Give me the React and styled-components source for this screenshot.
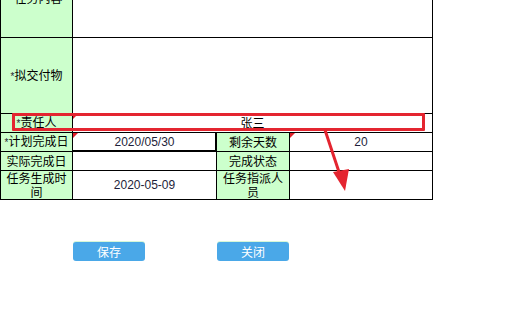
import React from "react";
import styled, { createGlobalStyle, css } from "styled-components";

const GlobalStyle = createGlobalStyle`
  html, body {
    margin: 0;
    padding: 0;
    background: #fff;
    overflow: hidden;
  }
  body {
    font-family: "Noto Sans CJK SC", "Liberation Sans", sans-serif;
    font-size: 12px;
    color: #000;
  }
`;

const Page = styled.div`
  position: relative;
  width: 508px;
  height: 323px;
  overflow: hidden;
`;

const Sheet = styled.div`
  display: grid;
  grid-template-columns: 72px 144px 73px 143px;
  grid-template-rows: 77px 76px 19px 19px 19px 29px;
  width: 433px;
  margin-top: -40px;
  border-left: 1px solid #000;
  border-top: 1px solid #000;
  box-sizing: border-box;
`;

const Cell = styled.div`
  position: relative;
  box-sizing: border-box;
  border-right: 1px solid #000;
  border-bottom: 1px solid #000;
  display: flex;
  align-items: center;
  justify-content: center;
  text-align: center;
  line-height: 14px;
  padding: ${(p) => (p.$label ? "0 1px" : "0")};
  grid-column: ${(p) => (p.$span ? `span ${p.$span}` : "auto")};
  background: ${(p) => (p.$label ? "#ccffcc" : "#fff")};
  color: ${(p) => (p.$num ? "#1e1e3a" : "#000")};
  font-family: ${(p) =>
    p.$num ? `"Liberation Sans", "Noto Sans CJK SC", sans-serif` : "inherit"};

  ${(p) =>
    p.$note &&
    css`
      &::before {
        content: "";
        position: absolute;
        left: 0;
        top: 0;
        border-top: 5px solid #e0202a;
        border-right: 5px solid transparent;
      }
    `}

  ${(p) =>
    p.$active &&
    css`
      box-shadow: inset -1px -1px 0 #000, -1px 0 0 #000;
    `}
`;

const Star = styled.span`
  font-family: "Liberation Sans", sans-serif;
  font-size: 10px;
  color: #223;
`;

const Actions = styled.div`
  display: flex;
  gap: 72px;
  padding-left: 73px;
  margin-top: 42px;
`;

const Button = styled.button`
  width: 72px;
  height: 19px;
  border: none;
  border-radius: 3px;
  background: #4aa8e8;
  color: #fff;
  font-family: "Noto Sans CJK SC", sans-serif;
  font-size: 12px;
  line-height: 19px;
  padding: 0;
  box-shadow: 0 -1px 0 #d6f7d8;
  cursor: pointer;
`;

const Highlight = styled.div`
  position: absolute;
  left: 12px;
  top: 113px;
  width: 413px;
  height: 18px;
  box-sizing: border-box;
  border: 3px solid #e42530;
  border-radius: 1px;
  pointer-events: none;
`;

const Arrow = styled.svg`
  position: absolute;
  left: 318px;
  top: 126px;
  pointer-events: none;
`;

const Label = ({ children, ...rest }) => (
  <Cell $label {...rest}>
    <span>{children}</span>
  </Cell>
);

export default function App() {
  return (
    <Page>
      <GlobalStyle />
      <Sheet>
        <Label>
          <Star>*</Star>任务内容
        </Label>
        <Cell $span={3} />

        <Label>
          <Star>*</Star>拟交付物
        </Label>
        <Cell $span={3} />

        <Label>
          <Star>*</Star>责任人
        </Label>
        <Cell $span={3} $note>
          张三
        </Cell>

        <Label>
          <Star>*</Star>计划完成日
        </Label>
        <Cell $num $note $active>
          2020/05/30
        </Cell>
        <Label>剩余天数</Label>
        <Cell $num $note>
          20
        </Cell>

        <Label>实际完成日</Label>
        <Cell />
        <Label>完成状态</Label>
        <Cell />

        <Label>任务生成时间</Label>
        <Cell $num>2020-05-09</Cell>
        <Label>任务指派人员</Label>
        <Cell />
      </Sheet>

      <Actions>
        <Button>保存</Button>
        <Button>关闭</Button>
      </Actions>

      <Highlight />
      <Arrow width="40" height="70" viewBox="0 0 40 70">
        <line x1="7" y1="4" x2="23" y2="52" stroke="#e42530" strokeWidth="3" />
        <polygon points="15,46 31,43 27,65" fill="#e42530" />
      </Arrow>
    </Page>
  );
}
